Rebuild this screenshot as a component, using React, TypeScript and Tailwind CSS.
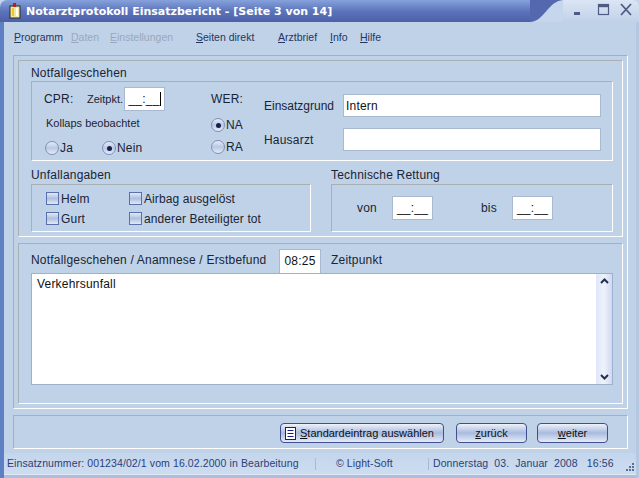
/**
 * Notarztprotokoll Einsatzbericht, page 3 of 14
 */

/** Label with an underlined mnemonic letter */
function Mn({ before = '', letter, after }: { before?: string; letter: string; after: string }) {
  return (
    <span>
      {before}
      <span className="underline">{letter}</span>
      {after}
    </span>
  );
}

function Radio({ label, checked = false }: { label: string; checked?: boolean }) {
  return (
    <div className="flex items-center gap-px">
      <div className="w-[14px] h-[14px] rounded-full border border-[#7f8fb8] bg-gradient-to-b from-[#e6ecf6] via-[#b9c8e4] to-[#e6ecf6] flex items-center justify-center">
        {checked ? <div className="w-[5px] h-[5px] rounded-full bg-[#14204e]" /> : null}
      </div>
      <span>{label}</span>
    </div>
  );
}

function Check({ label }: { label: string }) {
  return (
    <div className="flex items-center gap-[2px]">
      <div className="w-[13px] h-[13px] border border-[#5a70ac] bg-gradient-to-b from-[#e2e9f5] via-[#aebfe0] to-[#e2e9f5]" />
      <span>{label}</span>
    </div>
  );
}

function TimeField({ value = '__:__', caret = false, className = '' }: { value?: string; caret?: boolean; className?: string }) {
  return (
    <div className={`bg-white border border-[#a9b9d2] flex items-center justify-center text-[#111] ${className}`}>
      {value}
      {caret ? <div className="w-px h-[14px] bg-black" /> : null}
    </div>
  );
}

function Btn({ children, className = '' }: { children: React.ReactNode; className?: string }) {
  return (
    <div className={`h-[20px] rounded-[4px] border border-[#3f4f8f] bg-gradient-to-b from-[#eef2fa] via-[#a9bbdf] to-[#e6ecf7] flex items-center text-[#111] ${className}`}>
      {children}
    </div>
  );
}

const GROOVE = 'border border-t-[#a8b0b4] border-l-[#a8b0b4] border-r-white border-b-white';

export default function App() {
  return (
    <div
      className="w-[639px] h-[478px] overflow-hidden bg-[#bfd2e8] text-[12px] leading-none tracking-[0.2px] text-[#1b2433] flex flex-col"
      style={{ fontFamily: '"Liberation Sans", Arial, sans-serif' }}
    >
      {/* Title bar */}
      <div className="h-[22px] flex shrink-0 bg-[#c6d6ec]">
        <div className="w-[530px] rounded-tl-[7px] bg-gradient-to-b from-[#86a2dc] via-[#5d74bb] to-[#4c60a8] flex items-center pl-[9px] gap-[5px]">
          <svg width="12" height="16" viewBox="0 0 12 16">
            <rect x="1" y="3" width="10" height="12" fill="#f2e6a0" stroke="#2b2b2b" />
            <rect x="3" y="5" width="2" height="8" fill="#e8c820" />
            <rect x="7" y="5" width="2" height="8" fill="#fff" />
            <rect x="4" y="0" width="3" height="4" fill="#c01828" />
          </svg>
          <span
            className="text-white font-bold text-[11px] tracking-normal whitespace-nowrap"
            style={{ fontFamily: '"DejaVu Sans", sans-serif' }}
          >
            Notarztprotokoll Einsatzbericht - [Seite 3 von 14]
          </span>
        </div>
        <svg width="33" height="22" viewBox="0 0 33 22" className="shrink-0">
          <rect width="33" height="22" fill="#5468b0" />
          <path d="M0 22 C14 22 18 1 33 0 L33 22 Z" fill="#c6d6ec" />
        </svg>
        <div className="flex-1 rounded-tr-[7px] bg-gradient-to-b from-[#dbe5f4] to-[#c0d2e9] flex items-center justify-end pr-[4px] pb-[2px]">
          <svg width="64" height="14" viewBox="0 0 64 14" fill="none" stroke="#4f5a86">
            <path d="M3 10.5 H9" strokeWidth="3" />
            <rect x="27.5" y="1.5" width="10" height="10" strokeWidth="1.2" />
            <path d="M27.5 3 H37.5" strokeWidth="2.4" />
            <path d="M50 1 L60 12 M60 1 L50 12" strokeWidth="1.8" />
          </svg>
        </div>
      </div>

      <div className="flex-1 flex flex-col border-l-[4px] border-l-[#5f7fc4] border-r-[3px] border-r-[#b5c8e2] min-h-0">
        {/* Menu */}
        <div className="h-[33px] shrink-0 flex items-center pl-[10px] pb-[3px] text-[10.5px] tracking-normal text-[#26365e] whitespace-nowrap">
          <span className="w-[57px]"><Mn letter="P" after="rogramm" /></span>
          <span className="w-[39px] text-[#9aa8bc]"><Mn letter="D" after="aten" /></span>
          <span className="w-[86px] text-[#9aa8bc]"><Mn letter="E" after="instellungen" /></span>
          <span className="w-[82px]"><Mn letter="S" after="eiten direkt" /></span>
          <span className="w-[52px]"><Mn letter="A" after="rztbrief" /></span>
          <span className="w-[30px]"><Mn letter="I" after="nfo" /></span>
          <span><Mn letter="H" after="ilfe" /></span>
        </div>

        {/* Outer frame */}
        <div className={`ml-[9px] w-[615px] h-[354px] shrink-0 p-[4px] flex flex-col gap-[6px] ${GROOVE}`}>
          {/* Upper panel */}
          <div className={`h-[177px] shrink-0 pl-[12px] pr-[9px] flex flex-col ${GROOVE}`}>
            <div className="h-[20px] pt-[6px]">Notfallgeschehen</div>
            <div className={`h-[80px] shrink-0 flex ${GROOVE}`}>
              <div className="w-[179px] pl-[12px] pt-[11px] flex flex-col">
                <div className="h-[24px] flex items-start">
                  <span className="w-[43px]">CPR:</span>
                  <span className="w-[37px] pt-[1px] text-[11px] tracking-normal">Zeitpkt.</span>
                  <TimeField caret className="w-[41px] h-[24px] -mt-[6px]" />
                </div>
                <div className="pt-[1px] pl-[2px] text-[11px] tracking-normal">Kollaps beobachtet</div>
                <div className="flex mt-[12px] pl-[1px]">
                  <div className="w-[57px]"><Radio label="Ja" /></div>
                  <Radio label="Nein" checked />
                </div>
              </div>
              <div className="w-[53px] pt-[11px] flex flex-col">
                <div>WER:</div>
                <div className="mt-[13px]"><Radio label="NA" checked /></div>
                <div className="mt-[8px]"><Radio label="RA" /></div>
              </div>
              <div className="flex-1 flex flex-col pt-[12px] gap-[11px]">
                <div className="flex items-center">
                  <span className="w-[79px] tracking-normal">Einsatzgrund</span>
                  <div className="w-[258px] h-[23px] bg-white border border-[#a9b9d2] flex items-center pl-[2px] text-[#111]">Intern</div>
                </div>
                <div className="flex items-center">
                  <span className="w-[79px]">Hausarzt</span>
                  <div className="w-[258px] h-[23px] bg-white border border-[#a9b9d2]" />
                </div>
              </div>
            </div>
            <div className="flex gap-[20px] mt-[8px]">
              <div className="w-[280px]">
                <div className="h-[15px]">Unfallangaben</div>
                <div className={`h-[48px] pl-[14px] pt-[7px] flex ${GROOVE}`}>
                  <div className="w-[83px] flex flex-col gap-[7px]">
                    <Check label="Helm" />
                    <Check label="Gurt" />
                  </div>
                  <div className="flex flex-col gap-[7px] tracking-[0.1px]">
                    <Check label="Airbag ausgelöst" />
                    <Check label="anderer Beteiligter tot" />
                  </div>
                </div>
              </div>
              <div className="flex-1">
                <div className="h-[15px]">Technische Rettung</div>
                <div className={`h-[48px] flex items-center ${GROOVE}`}>
                  <span className="ml-[25px] w-[35px]">von</span>
                  <TimeField className="w-[41px] h-[24px]" />
                  <span className="ml-[48px] w-[31px]">bis</span>
                  <TimeField className="w-[41px] h-[24px]" />
                </div>
              </div>
            </div>
          </div>

          {/* Lower panel */}
          <div className={`h-[161px] shrink-0 pl-[12px] pr-[9px] flex flex-col ${GROOVE}`}>
            <div className="h-[29px] flex items-center pt-[2px]">
              <span className="w-[248px] whitespace-nowrap">Notfallgeschehen / Anamnese / Erstbefund</span>
              <TimeField value="08:25" className="w-[42px] h-[25px] mt-[3px]" />
              <span className="ml-[10px]">Zeitpunkt</span>
            </div>
            <div className="h-[112px] shrink-0 flex bg-white border border-[#9fb0cc]">
              <div className="flex-1 pl-[5px] pt-[4px] text-[#111]">Verkehrsunfall</div>
              <div className="w-[16px] bg-gradient-to-r from-[#dfe6f7] via-[#eef2fb] to-[#cfd9f2] flex flex-col justify-between items-center py-[4px]">
                <svg width="9" height="6" viewBox="0 0 9 6" fill="none" stroke="#26304e" strokeWidth="2"><path d="M1 5 L4.5 1.5 L8 5" /></svg>
                <svg width="9" height="6" viewBox="0 0 9 6" fill="none" stroke="#26304e" strokeWidth="2"><path d="M1 1 L4.5 4.5 L8 1" /></svg>
              </div>
            </div>
          </div>
        </div>

        {/* Button row */}
        <div className={`mt-[6px] ml-[9px] w-[615px] h-[34px] shrink-0 flex items-center pl-[266px] pt-[2px] ${GROOVE}`}>
          <Btn className="w-[164px] pl-[4px] gap-[4px] text-[11px] tracking-normal whitespace-nowrap">
            <svg width="11" height="13" viewBox="0 0 11 13">
              <rect x="0.5" y="0.5" width="10" height="12" fill="#fff" stroke="#1a1a8c" />
              <path d="M2.5 3.5 H8.5 M2.5 6.5 H8.5 M2.5 9.5 H8.5" stroke="#1a1a8c" />
            </svg>
            <Mn letter="S" after="tandardeintrag auswählen" />
          </Btn>
          <Btn className="ml-[12px] w-[71px] justify-center text-[11px] tracking-normal"><Mn letter="z" after="urück" /></Btn>
          <Btn className="ml-[10px] w-[71px] justify-center text-[11px] tracking-normal"><Mn letter="w" after="eiter" /></Btn>
        </div>

        {/* Status bar */}
        <div className="mt-[4px] h-[22px] shrink-0 flex items-center bg-gradient-to-b from-[#c4d6ec] to-[#cddcf0] text-[#2a3f78] text-[10.5px] tracking-[0.1px] pl-[3px] border-b border-b-[#dfe8f4]">
          <span className="w-[308px] whitespace-nowrap">Einsatznummer: 001234/02/1 vom 16.02.2000 in Bearbeitung</span>
          <div className="w-px h-[12px] bg-[#a9bbd4]" />
          <span className="ml-[20px] w-[92px]">© Light-Soft</span>
          <div className="w-px h-[12px] bg-[#a9bbd4]" />
          <span className="ml-[4px] whitespace-nowrap">Donnerstag&nbsp; 03.&nbsp; Januar&nbsp; 2008&nbsp;&nbsp; 16:56</span>
          <svg width="10" height="10" viewBox="0 0 10 10" className="ml-auto mr-[1px] mt-[6px]" fill="#5c6f96">
            <rect x="7" y="1" width="2" height="2" />
            <rect x="4" y="4" width="2" height="2" />
            <rect x="7" y="4" width="2" height="2" />
            <rect x="1" y="7" width="2" height="2" />
            <rect x="4" y="7" width="2" height="2" />
            <rect x="7" y="7" width="2" height="2" />
          </svg>
        </div>
        <div className="flex-1 bg-[#aabfdb]" />
      </div>
    </div>
  );
}
